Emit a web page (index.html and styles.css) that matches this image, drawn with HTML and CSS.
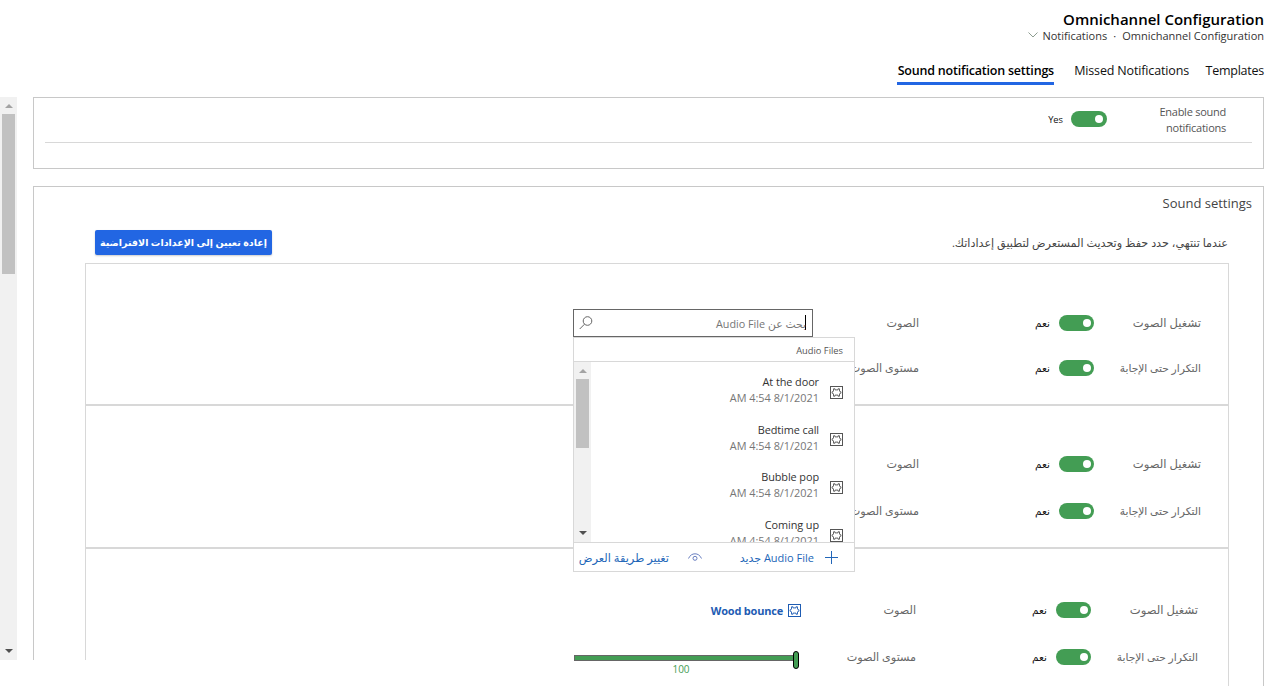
FILE: index.html
```
<!DOCTYPE html>
<html lang="ar" dir="rtl">
<head>
<meta charset="utf-8">
<title>Omnichannel Configuration</title>
<link rel="stylesheet" href="styles.css">
</head>
<body>
<svg class="defs" width="0" height="0">
  <symbol id="puzzle" viewBox="0 0 13 13">
    <rect x=".5" y=".5" width="12" height="12" fill="none" stroke="currentColor"/>
    <path d="M3.500 2.800H5v1.100h3V2.800h1.500v2.400l1.400.6v1.400l-1.400.6v2.400H8V9.100H5v1.100H3.500V7.800l-1.400-.6V5.800l1.400-.6z" fill="none" stroke="currentColor" stroke-width=".9" stroke-linejoin="round"/>
  </symbol>
</svg>
<header class="header">
  <h1 class="title">Omnichannel Configuration</h1>
  <div class="crumbs" dir="ltr">
    <svg class="chevron" viewBox="0 0 10 6"><path d="M.5.5 5 5 9.500.5"/></svg>
    <span>Notifications</span><span class="dot">·</span><span>Omnichannel Configuration</span>
  </div>
  <nav class="tabs">
    <a class="tab tab-templates">Templates</a>
    <a class="tab tab-missed">Missed Notifications</a>
    <a class="tab active">Sound notification settings</a>
  </nav>
</header>
<main class="main">
  <div class="content">
    <section class="card enable">
      <div class="enable-row">
        <div class="enable-label" dir="ltr">Enable sound<br>notifications</div>
        <span class="toggle wide"></span>
        <span class="yes">Yes</span>
      </div>
    </section>
    <section class="card settings">
      <h2 class="subtitle">Sound settings</h2>
      <div class="hint-row">
        <p class="hint">عندما تنتهي، حدد حفظ وتحديث المستعرض لتطبيق إعداداتك.</p>
        <button class="reset">إعادة تعيين إلى الإعدادات الافتراضية</button>
      </div>
      <div class="group first">
        <div class="row">
          <span class="label play">تشغيل الصوت</span><span class="toggle"></span><span class="state">نعم</span><span class="label">الصوت</span>
          <div class="search">
            <span class="caret"></span><span class="placeholder">بحث عن Audio File</span>
            <svg class="lens" viewBox="0 0 14 14"><circle cx="8.500" cy="5" r="4.300"/><path d="M5.500 8.200.7 13"/></svg>
            <div class="dropdown">
              <div class="dd-head">Audio Files</div>
              <div class="dd-body">
                <div class="dd-list">
                  <div class="item"><svg class="puzzle"><use href="#puzzle"/></svg><div class="info"><div class="name">At the door</div><div class="date" dir="ltr">AM 4:54 8/1/2021</div></div></div>
                  <div class="item"><svg class="puzzle"><use href="#puzzle"/></svg><div class="info"><div class="name">Bedtime call</div><div class="date" dir="ltr">AM 4:54 8/1/2021</div></div></div>
                  <div class="item"><svg class="puzzle"><use href="#puzzle"/></svg><div class="info"><div class="name">Bubble pop</div><div class="date" dir="ltr">AM 4:54 8/1/2021</div></div></div>
                  <div class="item"><svg class="puzzle"><use href="#puzzle"/></svg><div class="info"><div class="name">Coming up</div><div class="date" dir="ltr">AM 4:54 8/1/2021</div></div></div>
                </div>
                <div class="scroll"><i class="up"></i><i class="thumb"></i><i class="down"></i></div>
              </div>
              <div class="dd-foot">
                <svg class="plus" viewBox="0 0 13 13"><path d="M6.500 0v13M0 6.500h13"/></svg>
                <span class="new">Audio File جديد</span>
                <svg class="eye" viewBox="0 0 14 8"><path d="M.5 5.500C2 2.200 4.300.8 7 .8s5 1.400 6.500 4.700"/><circle cx="7" cy="5.300" r="2"/></svg>
                <span class="view">تغيير طريقة العرض</span>
              </div>
            </div>
          </div>
        </div>
        <div class="row">
          <span class="label repeat">التكرار حتى الإجابة</span><span class="toggle"></span><span class="state">نعم</span><span class="label">مستوى الصوت</span>
        </div>
      </div>
      <div class="group">
        <div class="row">
          <span class="label play">تشغيل الصوت</span><span class="toggle"></span><span class="state">نعم</span><span class="label">الصوت</span>
        </div>
        <div class="row">
          <span class="label repeat">التكرار حتى الإجابة</span><span class="toggle"></span><span class="state">نعم</span><span class="label">مستوى الصوت</span>
        </div>
      </div>
      <div class="group last">
        <div class="row">
          <span class="label play">تشغيل الصوت</span><span class="toggle"></span><span class="state">نعم</span><span class="label">الصوت</span>
          <div class="chosen"><svg class="puzzle"><use href="#puzzle"/></svg><span>Wood bounce</span></div>
        </div>
        <div class="row">
          <span class="label repeat">التكرار حتى الإجابة</span><span class="toggle"></span><span class="state">نعم</span><span class="label">مستوى الصوت</span>
          <div class="volume"><div class="track"><i class="knob"></i></div><span class="value">100</span></div>
        </div>
      </div>
    </section>
  </div>
  <div class="scroll page-scroll"><i class="up"></i><i class="thumb"></i><i class="down"></i></div>
  <div class="corner"></div>
</main>
</body>
</html>
```
FILE: styles.css
```
* { box-sizing: border-box; }
body { margin: 0; width: 1275px; height: 689px; overflow: hidden; background: #fff; color: #333; font-family: "Open Sans", "Noto Sans", "DejaVu Sans", sans-serif; font-size: 11px; white-space: nowrap; }
.defs { position: absolute; }
h1, h2, p { margin: 0; font-weight: 400; }
.header { height: 97px; padding: 10px 11px 0 0; }
.title { height: 18px; line-height: 19px; font-size: 15px; font-weight: 600; color: #000; }
.crumbs { display: flex; justify-content: flex-end; align-items: center; height: 14px; font-size: 11px; color: #333; }
.chevron { width: 10px; height: 6px; margin-right: 4px; fill: none; stroke: #8d9d90; }
.dot { width: 15px; text-align: center; }
.tabs { display: flex; margin-top: 19px; height: 24px; font-size: 12.500px; letter-spacing: -.15px; line-height: 20px; color: #111; }
.tab { height: 24px; }
.tab-templates { width: 58px; margin-left: 17px; letter-spacing: -.25px; }
.tab-missed { width: 115px; margin-left: 20px; }
.active { width: 157px; font-weight: 600; letter-spacing: -.2px; color: #000; border-bottom: 3px solid #2266e3; }
.main { display: flex; position: relative; height: 589px; padding-right: 11px; overflow: hidden; }
.content { width: 1231px; margin-left: 16px; flex: none; }
.card { border: 1px solid #c8c8c8; }
.enable { height: 72px; padding: 0 11px; }
.enable-row { display: flex; align-items: center; height: 45px; padding: 0 26px 2px 0; border-bottom: 1px solid #d8d8d8; }
.enable-label { width: 119px; padding-top: 2px; text-align: right; line-height: 16px; letter-spacing: -.25px; color: #555; }
.toggle { position: relative; flex: none; width: 35px; height: 16px; border-radius: 8px; background: #439d54; }
.toggle::after { content: ""; position: absolute; right: 3px; top: 4px; width: 8px; height: 8px; border-radius: 50%; background: #fff; }
.wide { width: 36px; }
.wide::after { right: 4px; }
.yes { margin-right: 8px; padding-top: 1px; font-size: 9.300px; color: #111; }
.settings { height: 700px; margin-top: 17px; }
.subtitle { height: 32px; padding-right: 11px; line-height: 32px; font-size: 13px; color: #444; }
.hint-row { display: flex; justify-content: space-between; align-items: center; height: 44px; padding: 3px 35px 0 61px; }
.hint { font-size: 11.200px; color: #444; }
.reset { width: 177px; height: 25px; padding: 0 0 1px; border: 0; border-radius: 2px; background: #2266e3; color: #fff; font: bold 9.500px "Noto Sans", "DejaVu Sans", sans-serif; box-shadow: 0 1px 2px #ccc; }
.group { width: 1144px; height: 143px; margin-right: 34px; padding: 34px 27px 0 0; border: 1px solid #d8d8d8; }
.first { height: 142px; padding-top: 36px; }
.last { height: 200px; padding: 37px 30px 0 0; }
.row { display: grid; grid-template-columns: 107px 44px 131px 106px 240px; align-items: center; height: 47px; }
.first .row { height: 45px; }
.last .row { grid-template-columns: 107px 44px 131px 115px 228px; }
.label { color: #666; font-size: 11.200px; }
.play { font-size: 11.600px; }
.repeat { font-size: 10.700px; }
.state { color: #111; padding-top: 1px; font-size: 10.500px; }
.search { position: relative; display: flex; align-items: center; height: 28px; padding: 0 6px; border: 1px solid #666; background: #fff; color: #767676; }
.caret { width: 1px; height: 15px; margin-left: -1px; background: #000; }
.placeholder { font-size: 10.800px; padding-top: 1px; }
.lens { width: 14px; height: 14px; margin: 0 auto 0 -1px; fill: none; stroke: #666; }
.dropdown { position: absolute; z-index: 2; left: -1px; top: 27px; width: 282px; height: 235px; border: 1px solid #d8d8d8; background: #fff; }
.dd-head { height: 24px; padding-right: 11px; line-height: 25px; font-size: 9.300px; color: #555; border-bottom: 1px solid #d8d8d8; }
.dd-body { display: flex; height: 180px; overflow: hidden; }
.dd-list { flex: 1; padding: 7px 11px 0 0; }
.item { display: flex; align-items: center; gap: 11px; height: 47.600px; line-height: 16px; }
.info { padding-bottom: 4.400px; font-size: 10.900px; }
.puzzle { width: 13px; height: 13px; flex: none; color: #555; }
.name { color: #333; text-align: right; letter-spacing: -.08px; }
.date { color: #767676; }
.scroll { display: flex; flex-direction: column; align-items: center; width: 17px; background: #f1f1f1; }
.thumb { width: 13px; height: 69px; margin-top: 6px; background: #c1c1c1; }
.up, .down { border: 4px solid transparent; }
.up { border-top: 0; border-bottom-color: #a3a3a3; margin-top: 7px; }
.down { border-bottom: 0; border-top-color: #505050; margin-top: auto; margin-bottom: 7px; }
.dd-foot { display: flex; align-items: center; height: 29px; padding: 1px 16px 0 0; border-top: 1px solid #d8d8d8; color: #2266b8; }
.plus { width: 13px; height: 13px; fill: none; stroke: #2266b8; }
.new { width: 74px; margin-right: 11px; }
.eye { width: 14px; height: 8px; margin-right: 38px; fill: none; stroke: #6a7fc0; }
.view { margin-right: 19px; font-size: 11.400px; }
.chosen { display: flex; align-items: center; gap: 5px; color: #1e5cb3; font-weight: 700; letter-spacing: -.2px; }
.chosen .puzzle { color: #1e5cb3; margin-top: 1px; }
.chosen span { padding-top: 1px; }
.volume { width: 225px; height: 22px; margin: 19px 2px 0 0; text-align: center; }
.track { position: relative; height: 6px; border: 1px solid #666; background: #439d54; }
.knob { position: absolute; right: -1px; top: -5px; width: 6px; height: 18px; border: 1px solid #000; border-radius: 3px; background: #439d54; }
.value { display: block; line-height: 17px; font-size: 10px; color: #439d54; padding-right: 11px; }
.page-scroll { flex: none; height: 563px; }
.page-scroll .thumb { height: 160px; }
.corner { position: absolute; left: 0; top: 563px; width: 300px; height: 26px; background: #fff; }
```
